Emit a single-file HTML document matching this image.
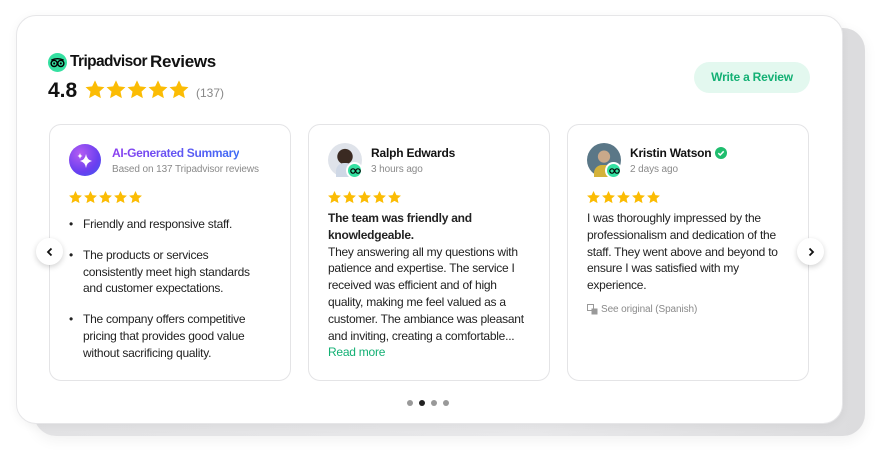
<!DOCTYPE html>
<html><head><meta charset="utf-8">
<style>
*{margin:0;padding:0;box-sizing:border-box}
body{width:880px;height:454px;background:#fff;position:relative;overflow:hidden;font-family:"Liberation Sans",sans-serif;color:#111}
.slab{position:absolute;left:34px;top:28px;width:831px;height:408px;border-radius:22px;background:linear-gradient(90deg,#e2e2e4,#e8e8ea 60%,#dcdcde);box-shadow:0 4px 14px rgba(0,0,0,.06)}
.main{position:absolute;left:16px;top:15px;width:827px;height:409px;border-radius:20px;background:#fff;border:1px solid #e6e6e8;box-shadow:0 2px 10px rgba(0,0,0,.05)}
.abs{position:absolute;white-space:nowrap}
.card{position:absolute;top:124px;width:242px;height:257px;border:1px solid #e4e4e6;border-radius:12px;background:#fff}
.name{font-weight:bold;font-size:12px;letter-spacing:-0.2px}
.sub{font-size:10px;color:#8a8a8a;letter-spacing:-0.1px}
.txt{font-size:12px;line-height:16.8px;color:#222;letter-spacing:-0.25px;white-space:nowrap}
.arrow{position:absolute;top:238px;width:27px;height:27px;border-radius:50%;background:#fff;box-shadow:0 2px 6px rgba(0,0,0,.18);display:flex;align-items:center;justify-content:center}
.dot{position:absolute;top:400px;width:6px;height:6px;border-radius:50%;background:#888}
.av{position:absolute;width:34px;height:34px;border-radius:50%}
.badge{position:absolute;width:17px;height:17px;border-radius:50%;background:#34e0a1;border:2px solid #fff}
</style></head><body>
<svg width="0" height="0" style="position:absolute"><defs><symbol id="st" viewBox="0 0 24 24"><path d="M12 1.5l3.1 6.6 7.2.8-5.4 4.9 1.5 7.1L12 17.3 5.6 20.9l1.5-7.1L1.7 8.9l7.2-.8z" fill="#fbbc04"/></symbol></defs></svg>
<div class="slab"></div>
<div class="main"></div>

<svg class="abs" style="left:48px;top:53px" width="19" height="19" viewBox="0 0 20 20"><circle cx="10" cy="10" r="10" fill="#34e0a1"/><circle cx="6.5" cy="11" r="3.2" fill="none" stroke="#000" stroke-width="1.5"/><circle cx="13.5" cy="11" r="3.2" fill="none" stroke="#000" stroke-width="1.5"/><circle cx="6.5" cy="11" r="1.1"/><circle cx="13.5" cy="11" r="1.1"/><path d="M3.5 7.5 Q10 4.5 16.5 7.5" fill="none" stroke="#000" stroke-width="1.4"/></svg>
<div class="abs" style="left:70px;top:53px;font-size:15.5px;font-weight:bold;letter-spacing:-0.6px">Tripadvisor</div>
<div class="abs" style="left:150px;top:52px;font-size:17px;font-weight:bold;letter-spacing:-0.3px">Reviews</div>
<div class="abs" style="left:48px;top:79px;font-size:21px;font-weight:bold">4.8</div>
<svg class="abs" style="left:84px;top:79px" width="108" height="22"><use href="#st" x="0" width="22" height="22"/><use href="#st" x="21" width="22" height="22"/><use href="#st" x="42" width="22" height="22"/><use href="#st" x="63" width="22" height="22"/><use href="#st" x="84" width="22" height="22"/></svg>
<div class="abs" style="left:196px;top:86px;font-size:12px;color:#888">(137)</div>

<div class="abs" style="left:694px;top:62px;width:116px;height:31px;border-radius:16px;background:#e3f8ef;color:#13b074;font-weight:bold;font-size:12px;text-align:center;line-height:31px;letter-spacing:-0.2px">Write a Review</div>

<div class="card" style="left:49px"></div>
<div class="abs" style="left:69px;top:144px;width:32px;height:32px;border-radius:50%;background:radial-gradient(circle at 35% 30%,#b45cf2,#6a3ff0 60%,#3b5bf0)"></div>
<svg class="abs" style="left:69px;top:144px" width="32" height="32" viewBox="0 0 32 32"><path d="M17 10 Q18 16 23 17 Q18 18 17 24 Q16 18 11 17 Q16 16 17 10Z" fill="#fff"/><path d="M11 9 Q11.5 11.5 13.5 12 Q11.5 12.5 11 15 Q10.5 12.5 8.5 12 Q10.5 11.5 11 9Z" fill="#fff"/></svg>
<div class="abs" style="left:112px;top:146px;font-size:12px;font-weight:bold;letter-spacing:-0.3px;background:linear-gradient(90deg,#8a3ef0,#3d6cf5);-webkit-background-clip:text;color:transparent">AI-Generated Summary</div>
<div class="abs sub" style="left:112px;top:164px">Based on 137 Tripadvisor reviews</div>
<svg class="abs" style="left:68px;top:190px" width="78" height="15"><use href="#st" x="0" width="15" height="15"/><use href="#st" x="15" width="15" height="15"/><use href="#st" x="30" width="15" height="15"/><use href="#st" x="45" width="15" height="15"/><use href="#st" x="60" width="15" height="15"/></svg>
<div class="abs txt" style="left:69px;top:216px">
<div style="display:flex"><span style="width:14px">•</span><span>Friendly and responsive staff.</span></div>
<div style="display:flex;margin-top:14px"><span style="width:14px;flex:none">•</span><span>The products or services<br>consistently meet high standards<br>and customer expectations.</span></div>
<div style="display:flex;margin-top:14px"><span style="width:14px;flex:none">•</span><span>The company offers competitive<br>pricing that provides good value<br>without sacrificing quality.</span></div>
</div>

<div class="card" style="left:308px"></div>
<div class="av" style="left:328px;top:143px;background:radial-gradient(circle at 50% 40%,#3a2a22 0 28%,#dfe3ea 30%);"></div>
<div class="abs" style="left:336px;top:163px;width:18px;height:14px;border-radius:8px 8px 0 0;background:#cfd8e6"></div>
<div class="badge" style="left:346px;top:162px"></div>
<svg class="abs" style="left:350px;top:167px" width="11" height="7" viewBox="0 0 11 7"><circle cx="3" cy="4" r="2.2" fill="none" stroke="#000" stroke-width="1.2"/><circle cx="8" cy="4" r="2.2" fill="none" stroke="#000" stroke-width="1.2"/></svg>
<div class="abs name" style="left:371px;top:146px">Ralph Edwards</div>
<div class="abs sub" style="left:371px;top:164px">3 hours ago</div>
<svg class="abs" style="left:327px;top:190px" width="78" height="15"><use href="#st" x="0" width="15" height="15"/><use href="#st" x="15" width="15" height="15"/><use href="#st" x="30" width="15" height="15"/><use href="#st" x="45" width="15" height="15"/><use href="#st" x="60" width="15" height="15"/></svg>
<div class="abs txt" style="left:328px;top:210px"><b>The team was friendly and<br>knowledgeable.</b><br>They answering all my questions with<br>patience and expertise. The service I<br>received was efficient and of high<br>quality, making me feel valued as a<br>customer. The ambiance was pleasant<br>and inviting, creating a comfortable...<br><span style="color:#13b074">Read more</span></div>

<div class="card" style="left:567px"></div>
<div class="av" style="left:587px;top:143px;background:radial-gradient(circle at 50% 40%,#c9a98a 0 22%,#5a7787 24%)"></div>
<div class="abs" style="left:594px;top:165px;width:20px;height:12px;border-radius:8px 8px 0 0;background:#d4b23a"></div>
<div class="badge" style="left:605px;top:162px"></div>
<svg class="abs" style="left:609px;top:167px" width="11" height="7" viewBox="0 0 11 7"><circle cx="3" cy="4" r="2.2" fill="none" stroke="#000" stroke-width="1.2"/><circle cx="8" cy="4" r="2.2" fill="none" stroke="#000" stroke-width="1.2"/></svg>
<div class="abs name" style="left:630px;top:146px">Kristin Watson</div>
<svg class="abs" style="left:715px;top:147px" width="12" height="12" viewBox="0 0 12 12"><circle cx="6" cy="6" r="6" fill="#1fbd6e"/><path d="M3.3 6.2 L5.2 8 L8.7 4.3" fill="none" stroke="#fff" stroke-width="1.5"/></svg>
<div class="abs sub" style="left:630px;top:164px">2 days ago</div>
<svg class="abs" style="left:586px;top:190px" width="78" height="15"><use href="#st" x="0" width="15" height="15"/><use href="#st" x="15" width="15" height="15"/><use href="#st" x="30" width="15" height="15"/><use href="#st" x="45" width="15" height="15"/><use href="#st" x="60" width="15" height="15"/></svg>
<div class="abs txt" style="left:587px;top:210px">I was thoroughly impressed by the<br>professionalism and dedication of the<br>staff. They went above and beyond to<br>ensure I was satisfied with my<br>experience.</div>
<svg class="abs" style="left:587px;top:304px" width="11" height="11" viewBox="0 0 11 11"><rect x="0.5" y="0.5" width="6" height="6" fill="none" stroke="#999"/><rect x="4.5" y="4.5" width="6" height="6" fill="#999"/></svg>
<div class="abs sub" style="left:601px;top:304px">See original (Spanish)</div>

<div class="arrow" style="left:36px"><svg width="10" height="10" viewBox="0 0 10 10"><path d="M6.5 1.5 L3 5 L6.5 8.5" fill="none" stroke="#111" stroke-width="1.8"/></svg></div>
<div class="arrow" style="left:797px"><svg width="10" height="10" viewBox="0 0 10 10"><path d="M3.5 1.5 L7 5 L3.5 8.5" fill="none" stroke="#111" stroke-width="1.8"/></svg></div>

<div class="dot" style="left:407px;background:#999"></div>
<div class="dot" style="left:419px;background:#222"></div>
<div class="dot" style="left:431px;background:#999"></div>
<div class="dot" style="left:443px;background:#999"></div>
</body></html>
